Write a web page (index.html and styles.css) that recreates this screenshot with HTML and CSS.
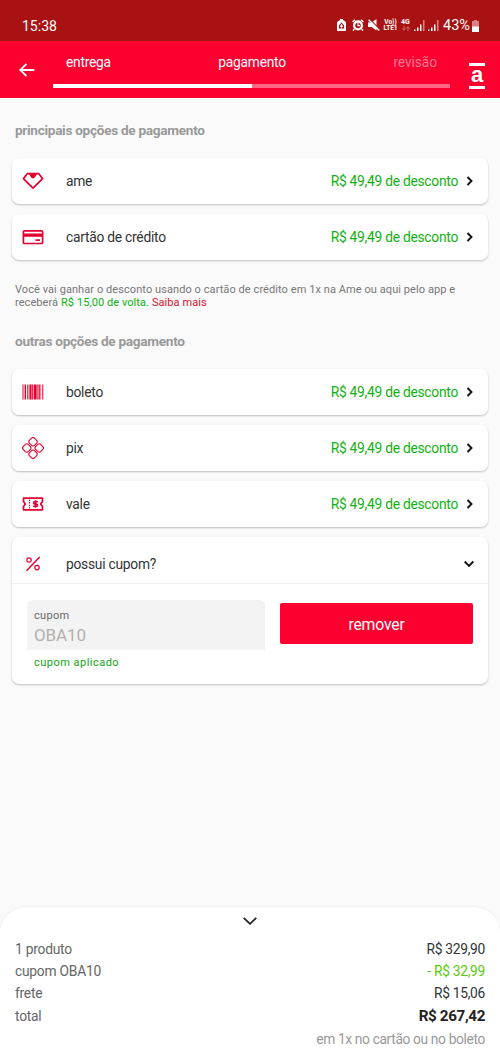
FILE: index.html
```
<!DOCTYPE html>
<html lang="pt-BR">
<head>
<meta charset="utf-8">
<title>Pagamento</title>
<link rel="stylesheet" href="styles.css">
</head>
<body>
<div class="screen">
  <div class="status">
    <span class="clock">15:38</span>
    <div class="indicators">
      <svg class="saver" width="9" height="12" viewBox="0 0 9 12"><path fill="#fff" fill-rule="evenodd" d="M3 0h3v1l3 2v9H0V3l3-2zM4.500 3.500 2 6.200v3.300h5V6.200z"/><path fill="#fff" d="M4.500 4.700 6 7.200 4.500 9 3 7.200z"/></svg>
      <svg class="alarm" width="12" height="12" viewBox="0 0 12 12"><path d="M.6 3 3 .8M11.400 3 9 .8M2.300 10.200 1 11.600M9.700 10.200l1.300 1.400" stroke="#fff" stroke-width="1.500"/><circle cx="6" cy="6.400" r="3.900" fill="none" stroke="#fff" stroke-width="2.300"/><path d="M6 4v2.600h2" fill="none" stroke="#fff" stroke-width="1.100"/></svg>
      <svg class="mute" width="12" height="12" viewBox="0 0 12 12"><path fill="#fff" d="M0 3.500h3.500L8.500 0v11.500L3.500 8H0z"/><path d="m1.500 0 10.500 10.500" stroke="#a81212" stroke-width="1.200"/><path d="m.6.800 10.700 10.700" stroke="#fff" stroke-width="1.500"/></svg>
      <span class="volte"><span>Vo))</span><span>LTE1</span></span>
      <span class="net"><span>4G</span><svg width="8" height="5" viewBox="0 0 8 5"><path d="M2 0v4M.5 2.500 2 4.300l1.500-1.800M6 5V1M4.500 2.500 6 .7l1.500 1.800" fill="none" stroke="#d98282" stroke-width=".8"/></svg></span>
      <svg class="signal" width="11" height="12" viewBox="0 0 11 12"><path fill="#fff" d="M0 9.500h1.500V11H0zM3 7.500h1.500V11H3zM6 4.500h1.500V11H6z"/><path fill="#d98282" d="M9 0h1.500v11H9z"/></svg>
      <svg class="signal" width="11" height="12" viewBox="0 0 11 12"><path fill="#fff" d="M0 9.500h1.500V11H0zM3 7.500h1.500V11H3zM6 4.500h1.500V11H6z"/><path fill="#d98282" d="M9 0h1.500v11H9z"/></svg>
      <span class="percent">43%</span>
      <svg class="battery" width="7" height="12" viewBox="0 0 7 12"><path fill="#d98282" d="M2 0h3v1h2v6H0V1h2z"/><path fill="#fff" d="M0 6.500h7V12H0z"/></svg>
    </div>
  </div>

  <header class="header">
    <svg class="back" width="16" height="14" viewBox="0 0 16 14"><path d="M15.300 7H1.500M7.500.8 1.300 7l6.200 6.200" fill="none" stroke="#fff" stroke-width="1.900"/></svg>
    <div class="steps">
      <div class="step-names"><span>entrega</span><span>pagamento</span><span class="pending">revisão</span></div>
      <div class="track"><div class="done"></div></div>
    </div>
    <div class="logo">a</div>
  </header>

  <main class="content">
    <h2 class="heading">principais opções de pagamento</h2>
    <div class="cards">
      <div class="card row">
        <svg class="icon" viewBox="0 0 22 22"><path d="M5.200 3.700h11.600l3.800 5L11 18.200 1.400 8.700z" fill="none" stroke="#e4002f" stroke-width="1.700" stroke-linejoin="round"/><path d="M6 3.500h10c-1.700.7-2.700 4.900-5 4.900S7.700 4.200 6 3.500z" fill="#e4002f"/></svg>
        <span class="name">ame</span><span class="discount">R$ 49,49 de desconto</span>
        <svg class="chev" viewBox="0 0 8 10"><path d="m1.500 1 4 4-4 4" fill="none" stroke="#111" stroke-width="1.900"/></svg>
      </div>
      <div class="card row">
        <svg class="icon" viewBox="0 0 22 22"><rect x="1.400" y="4.900" width="19.200" height="12.600" rx="1" fill="none" stroke="#e4002f" stroke-width="1.700"/><path fill="#e4002f" d="M1 7.500h20v3.200H1zM13.500 13.300H18v1.700h-4.500z"/></svg>
        <span class="name">cartão de crédito</span><span class="discount">R$ 49,49 de desconto</span>
        <svg class="chev" viewBox="0 0 8 10"><path d="m1.500 1 4 4-4 4" fill="none" stroke="#111" stroke-width="1.900"/></svg>
      </div>
    </div>
    <p class="note">Você vai ganhar o desconto usando o cartão de crédito em 1x na Ame ou aqui pelo app e<br>receberá <span class="cashback">R$ 15,00 de volta.</span> <a class="more">Saiba mais</a></p>
    <h2 class="heading">outras opções de pagamento</h2>
    <div class="cards">
      <div class="card row">
        <svg class="icon" viewBox="0 0 22 22"><path fill="#e4002f" d="M.5 3.500h.8v15H.5zM3 3.500h1v15H3zM5 3.500h.7v15H5zM7.500 3.500h2v15h-2zM10.300 3.500h.7v15h-.7zM12 3.500h2.600v15H12zM15.600 3.500h.6v15h-.6zM17.200 3.500h1v15h-1zM20.300 3.500h1v15h-1z"/><path fill="#e4002f" opacity=".4" d="M1.300 3.500H3v15H1.300zM5.700 3.500h1.800v15H5.700zM9.500 3.500H12v15H9.500zM14.600 3.500h2.700v15h-2.700zM18.200 3.500h1v15h-1z"/></svg>
        <span class="name">boleto</span><span class="discount">R$ 49,49 de desconto</span>
        <svg class="chev" viewBox="0 0 8 10"><path d="m1.500 1 4 4-4 4" fill="none" stroke="#111" stroke-width="1.900"/></svg>
      </div>
      <div class="card row">
        <svg class="icon" viewBox="0 0 22 22"><g transform="rotate(45 11 11)" fill="none" stroke="#e4002f" stroke-width="1.100"><rect x="3" y="3" width="7.200" height="7.200" rx="2.400"/><rect x="11.800" y="3" width="7.200" height="7.200" rx="2.400"/><rect x="3" y="11.800" width="7.200" height="7.200" rx="2.400"/><rect x="11.800" y="11.800" width="7.200" height="7.200" rx="2.400"/></g></svg>
        <span class="name">pix</span><span class="discount">R$ 49,49 de desconto</span>
        <svg class="chev" viewBox="0 0 8 10"><path d="m1.500 1 4 4-4 4" fill="none" stroke="#111" stroke-width="1.900"/></svg>
      </div>
      <div class="card row">
        <svg class="icon" viewBox="0 0 22 22"><path d="M1.500 5.200h19v3.300L18.700 11l1.800 2.500v3.300h-19v-3.300L3.300 11 1.500 8.500z" fill="none" stroke="#e4002f" stroke-width="1.700" stroke-linejoin="round"/><path d="M7.500 6.500v9" stroke="#e4002f" stroke-width="1.200" stroke-dasharray="1.400 1.200"/><path d="M15.900 8.700h-3.300c-1.400 0-1.400 2.300 0 2.300h1.800c1.400 0 1.400 2.300 0 2.300h-3.300M13.500 7.300v7.400" fill="none" stroke="#e4002f" stroke-width="1.600"/></svg>
        <span class="name">vale</span><span class="discount">R$ 49,49 de desconto</span>
        <svg class="chev" viewBox="0 0 8 10"><path d="m1.500 1 4 4-4 4" fill="none" stroke="#111" stroke-width="1.900"/></svg>
      </div>
      <div class="card">
        <div class="row coupon-head">
          <svg class="icon" viewBox="0 0 22 22"><path d="M4.500 17.700 17.700 4.100" stroke="#e4002f" stroke-width="1.500"/><circle cx="7" cy="7" r="2.200" fill="none" stroke="#e4002f" stroke-width="1.200"/><circle cx="15" cy="14.600" r="2.200" fill="none" stroke="#e4002f" stroke-width="1.200"/></svg>
          <span class="name">possui cupom?</span>
          <svg class="chev-down" viewBox="0 0 10 8"><path d="m.7 1.500 4.300 4.300 4.300-4.300" fill="none" stroke="#111" stroke-width="1.900"/></svg>
        </div>
        <div class="coupon-body">
          <div class="entry">
            <div class="field"><span class="label">cupom</span><span class="value">OBA10</span></div>
            <div class="applied">cupom aplicado</div>
          </div>
          <button class="remove">remover</button>
        </div>
      </div>
    </div>
  </main>

  <footer class="summary">
    <svg class="collapse" viewBox="0 0 14 8"><path d="m.7.800 6.300 6 6.300-6" fill="none" stroke="#222" stroke-width="1.800"/></svg>
    <div class="line"><span>1 produto</span><span class="amount">R$ 329,90</span></div>
    <div class="line"><span>cupom OBA10</span><span class="amount off">- R$ 32,99</span></div>
    <div class="line"><span>frete</span><span class="amount">R$ 15,06</span></div>
    <div class="line total"><span>total</span><span class="amount sum">R$ 267,42</span></div>
    <div class="terms">em 1x no cartão ou no boleto</div>
  </footer>
</div>
</body>
</html>
```
FILE: styles.css
```
* { box-sizing: border-box; }
body { margin: 0; font-family: Roboto, "Liberation Sans", sans-serif; color: #333; }
.screen { width: 500px; height: 1056px; display: flex; flex-direction: column; background: #fafafa; overflow: hidden; }

.status { height: 41px; flex: none; background: #a81212; color: #fff; display: flex; justify-content: space-between; padding: 17px 21px 0 22px; line-height: 18px; }
.clock { font-size: 14px; }
.indicators { display: flex; align-items: flex-start; }
.indicators svg { flex: none; }
.saver, .alarm, .mute { margin-top: 2px; }
.signal, .battery { margin-top: 3px; }
.saver { margin-right: 6px; }
.alarm { margin-right: 4px; }
.mute { margin-right: 3px; }
.volte, .net { display: flex; flex-direction: column; align-items: center; font-size: 6.500px; font-weight: 700; line-height: 6px; margin-top: 2px; }
.volte { width: 15px; margin-right: 3px; }
.net { width: 9px; margin-right: 4px; font-size: 7px; gap: 1px; }
.signal { margin-right: 3px; }
.percent { font-size: 14.500px; width: 27px; margin-left: 1px; margin-right: 2px; }

.header { height: 57px; flex: none; background: #fc0030; color: #fff; display: flex; padding: 0 15px 0 19px; }
.back { margin-top: 22px; margin-right: 18px; flex: none; }
.steps { width: 397px; margin-right: 19px; flex: none; }
.step-names { display: flex; justify-content: space-between; padding: 12px 13px 0; font-size: 13.800px; letter-spacing: -.25px; line-height: 18px; height: 43px; }
.pending { color: #ff7a93; letter-spacing: -.1px; }
.track { height: 4px; background: #ff6684; }
.done { width: 50%; height: 4px; background: #fff; }
.logo { width: 16px; height: 26px; margin-top: 22px; border-top: 3px solid #fff; border-bottom: 3px solid #fff; font: 700 22px/17px "Liberation Sans", sans-serif; text-align: center; }

.content { padding: 23px 12px 0; flex: 1; }
.heading { margin: 0 3px; font-size: 13.600px; letter-spacing: -.29px; line-height: 18px; font-weight: 700; color: #999; }
.cards { margin-top: 19px; display: flex; flex-direction: column; gap: 10px; }
.card { background: #fff; border-radius: 7px; box-shadow: 0 1px 2px rgba(0, 0, 0, .24); }
.row { height: 46px; display: flex; align-items: center; padding: 0 14px 0 10px; }
.icon { width: 22px; height: 22px; margin-right: 22px; flex: none; }
.name { flex: 1; font-size: 13.800px; letter-spacing: -.25px; line-height: 18px; color: #333; }
.discount { font-size: 13.800px; letter-spacing: -.26px; line-height: 18px; color: #12b112; }
.chev { width: 8px; height: 10px; margin-left: 8px; }
.chev-down { width: 10px; height: 8px; }
.note { margin: 23px 3px; font-size: 11px; letter-spacing: .075px; line-height: 13px; color: #777; white-space: nowrap; }
.cashback { color: #12b112; }
.more { color: #d9102f; }
.coupon-head { height: 47px; padding-top: 8px; border-bottom: 1px solid #f1f1f1; }
.coupon-body { height: 100px; display: flex; padding: 16px 15px 0; }
.entry { width: 238px; margin-right: 15px; }
.field { height: 50px; background: #f3f3f3; border-radius: 6px 6px 0 0; padding: 9px 7px 0; display: flex; flex-direction: column; }
.label { font-size: 11px; line-height: 14px; color: #666; letter-spacing: .3px; }
.value { font-size: 17px; letter-spacing: -.1px; line-height: 24px; color: #b0b0b0; }
.applied { font-size: 11px; line-height: 14px; color: #12a512; letter-spacing: .48px; padding: 6px 7px 0; }
.remove { width: 193px; height: 41px; margin-top: 3px; padding: 2px 0 0; background: #fc0030; color: #fff; border: 0; border-radius: 2px; font: 15.800px/20px Roboto, sans-serif; letter-spacing: -.2px; }

.summary { height: 149px; flex: none; background: #fff; border-radius: 26px 26px 0 0; box-shadow: 0 -1px 2px rgba(0, 0, 0, .05); padding: 10px 15px 0 15px; display: flex; flex-direction: column; }
.collapse { width: 14px; height: 8px; align-self: center; margin-bottom: 13px; }
.line { display: flex; justify-content: space-between; font-size: 13.800px; letter-spacing: -.24px; line-height: 22px; color: #666; }
.amount { color: #333; letter-spacing: -.3px; }
.off { color: #5bcb0b; }
.total { line-height: 24px; }
.sum { font-size: 15.200px; letter-spacing: -.35px; font-weight: 700; color: #222; }
.terms { text-align: right; font-size: 13.800px; letter-spacing: -.37px; line-height: 22px; color: #999; }
```
